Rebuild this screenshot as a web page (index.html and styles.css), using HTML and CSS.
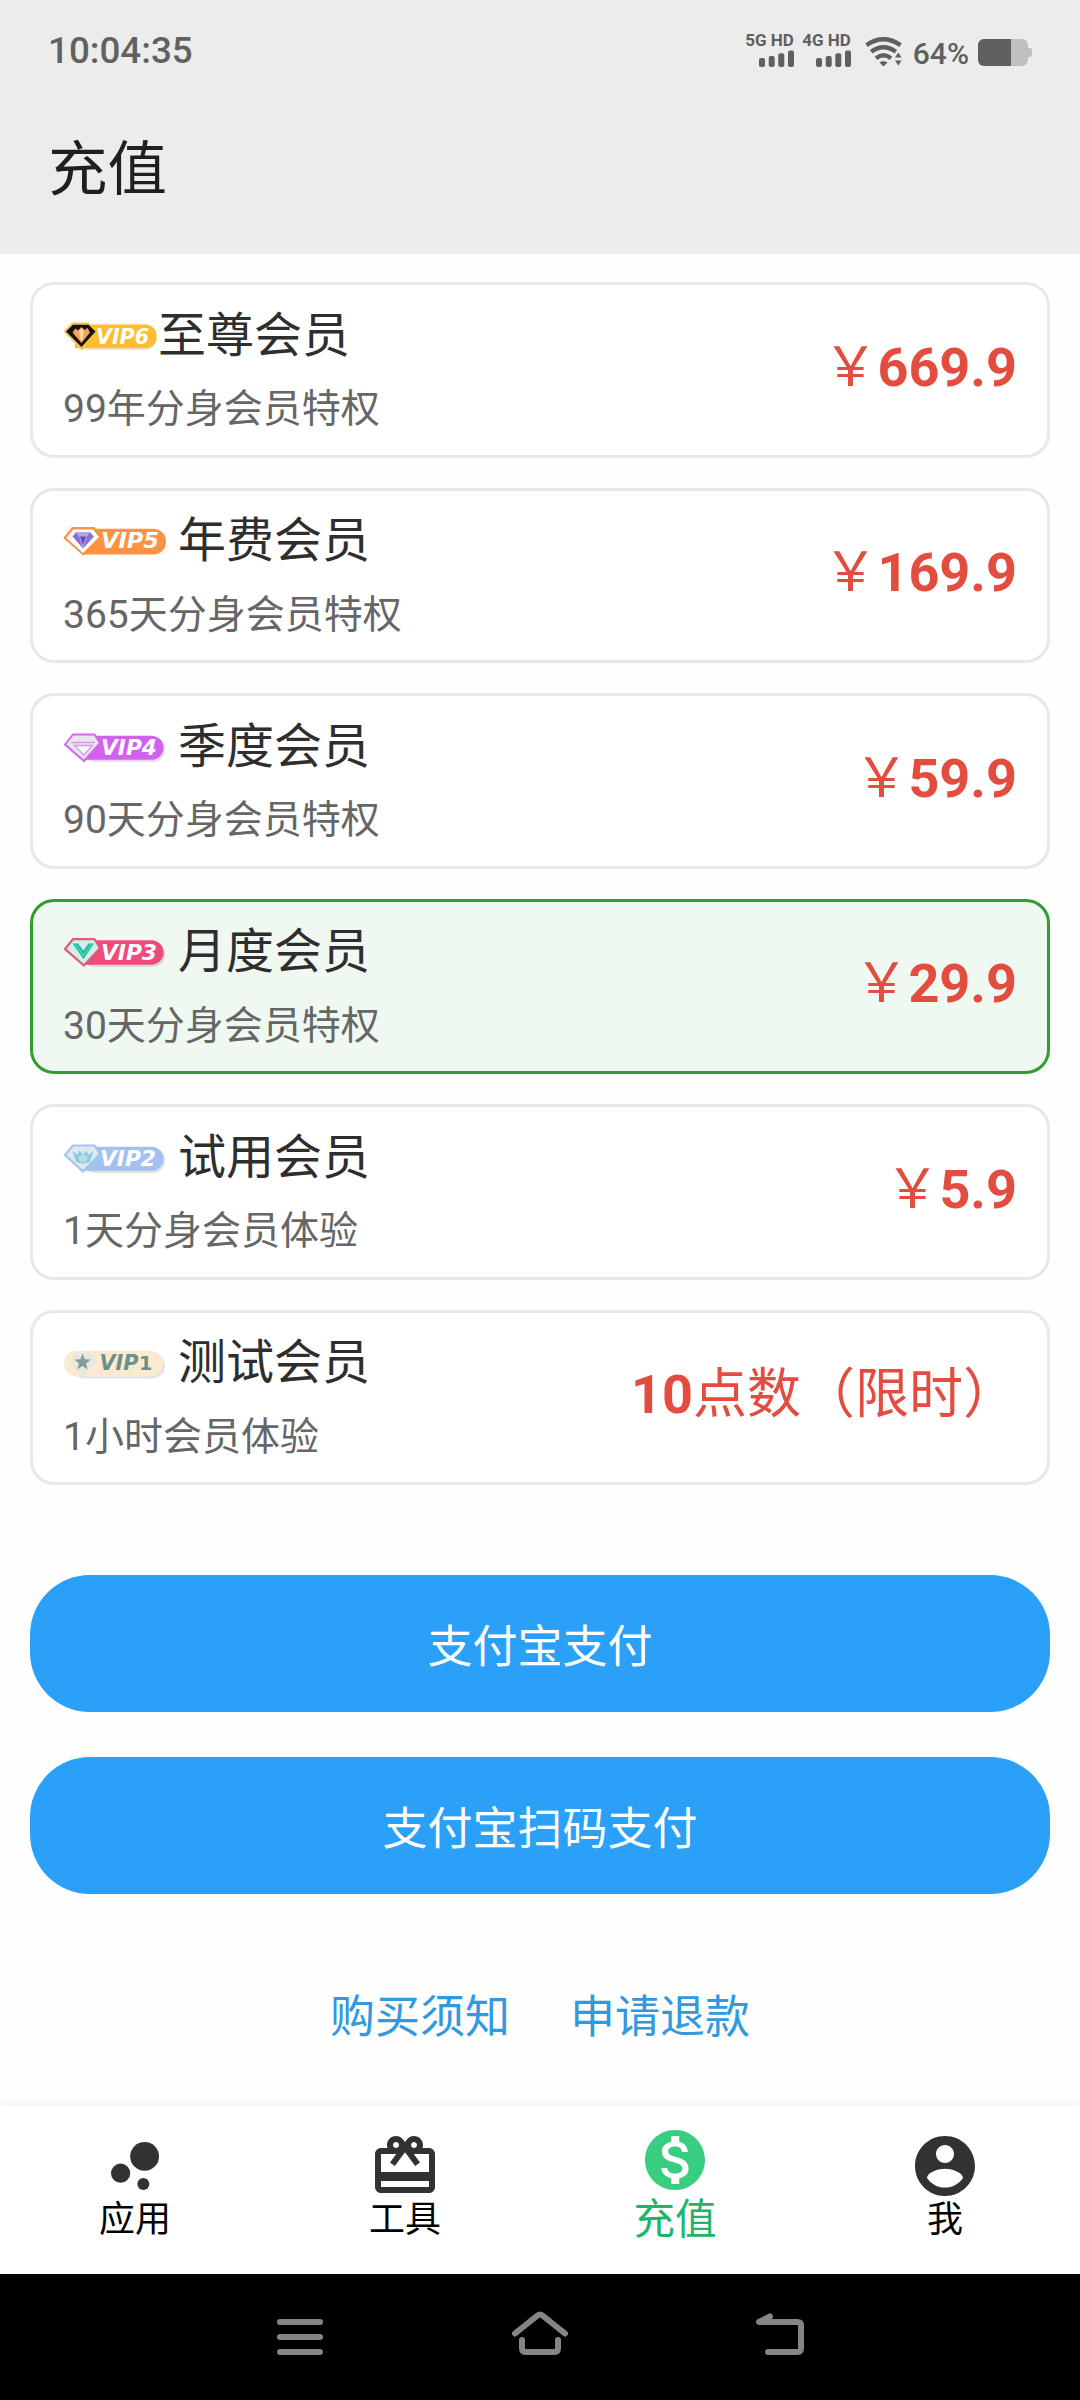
FILE: index.html
```html
<!DOCTYPE html>
<html lang="zh-CN">
<head>
<meta charset="utf-8">
<title>充值</title>
<link rel="stylesheet" href="styles.css">
</head>
<body>
<div class="screen">
  <header class="header">
    <div class="status">
      <span class="clock">10:04:35</span>
      <div class="indicators">
        <div class="signal">
          <span class="signal-label">5G HD</span>
          <svg class="bars" width="35" height="17" viewBox="0 0 35 17"><rect x="0" y="8" width="6" height="9" rx="2"/><rect x="9.7" y="6" width="6" height="11" rx="2"/><rect x="19.3" y="3.3" width="6" height="13.7" rx="2"/><rect x="29" y="0.5" width="6" height="16.5" rx="2"/></svg>
        </div>
        <div class="signal">
          <span class="signal-label">4G HD</span>
          <svg class="bars" width="35" height="17" viewBox="0 0 35 17"><rect x="0" y="8" width="6" height="9" rx="2"/><rect x="9.7" y="6" width="6" height="11" rx="2"/><rect x="19.3" y="3.3" width="6" height="13.7" rx="2"/><rect x="29" y="0.5" width="6" height="16.5" rx="2"/></svg>
        </div>
        <svg class="wifi" width="38" height="30" viewBox="0 0 38 30">
          <g fill="none" stroke="#5f5f5f" stroke-width="4.400">
            <path d="M1.500 8.200Q18.500 -3.800 35.500 8.200"/>
            <path d="M6.200 14.700Q18.500 5.700 30.800 14.700"/>
            <path d="M11 21.200Q18.500 15.200 26 21.200"/>
          </g>
          <path d="M14.500 25.500q4-2.500 8 0L18.500 29.500z" fill="#5f5f5f"/>
          <path d="M30 20.500l3.300-5 3.300 5zM30 23.500h6.600l-3.300 5z" fill="#5f5f5f" stroke="#ececec" stroke-width="1" paint-order="stroke"/>
        </svg>
        <span class="percent">64%</span>
        <svg class="battery" width="54" height="27" viewBox="0 0 54 27">
          <path d="M6 0H44a6 6 0 0 1 6 6v3h1.500a2.500 2.500 0 0 1 2.500 2.500v4a2.500 2.500 0 0 1-2.500 2.500H50v3a6 6 0 0 1-6 6H6a6 6 0 0 1-6-6V6a6 6 0 0 1 6-6z" fill="#c0c0c0"/>
          <path d="M6 0H33V27H6a6 6 0 0 1-6-6V6a6 6 0 0 1 6-6z" fill="#5f5f5f"/>
        </svg>
      </div>
    </div>
    <h1 class="page-title">充值</h1>
  </header>

  <main class="content">
    <section class="plans">
      <article class="plan">
        <div class="plan-info">
          <div class="plan-name">
            <svg class="badge badge-tight" width="95" height="36" viewBox="0 0 95 36">
              <rect x="16" y="7.500" width="77.500" height="24.500" rx="11" fill="#e9e4dc"/>
              <path d="M12 6.500H82.500a11 11 0 0 1 11 12a11 11 0 0 1-11 11.700H12z" fill="#fcbd33"/>
              <path d="M0.500 13.500L9 4.500H26L33 13.500L19 32.500z" fill="#f5c553"/>
              <path d="M3 13.500L10 6.800H25.500L32.500 13.500L18.500 29z" fill="#17110f"/>
              <path d="M9.500 14.500l3-4 2.500 2 3.500-3.500 3 3 3-2 2.500 4.500-8.500 10.500z" fill="#f7a35c"/>
              <path d="M16 13l2.500-3 2.500 3-1.500 9h-2z" fill="#ffd99a"/>
              <text class="badge-text" x="33" y="25.700" textLength="53" lengthAdjust="spacingAndGlyphs">VIP6</text>
            </svg>
            <span>至尊会员</span>
          </div>
          <p class="plan-desc">99年分身会员特权</p>
        </div>
        <div class="price"><span class="cjk">￥</span>669.9</div>
      </article>

      <article class="plan">
        <div class="plan-info">
          <div class="plan-name">
            <svg class="badge" width="104" height="36" viewBox="0 0 104 36">
              <path d="M20 5.700H90.500a12.500 12.500 0 0 1 12.500 13a12.500 12.500 0 0 1-12.500 12.800H20z" fill="#fd9243"/>
              <path d="M0.300 15L9 4H31.500L38 13L20.300 32.800z" fill="#fd9243"/>
              <path d="M3.300 15L10.300 6.500H30L36 14L20 30z" fill="#fff"/>
              <path d="M9.500 13.500L13 9.300H27L31 13.500L20 25.500z" fill="#8b70d4"/>
              <path d="M13 9.300H27l-3 4.200H16zM16 13.500h8L20 25.500z" fill="#b7a4ee"/>
              <path d="M17 13.500h6L20 22z" fill="#654bb8"/>
              <text class="badge-text" x="38" y="25.300" textLength="58" lengthAdjust="spacingAndGlyphs">VIP5</text>
            </svg>
            <span>年费会员</span>
          </div>
          <p class="plan-desc">365天分身会员特权</p>
        </div>
        <div class="price"><span class="cjk">￥</span>169.9</div>
      </article>

      <article class="plan">
        <div class="plan-info">
          <div class="plan-name">
            <svg class="badge" width="104" height="36" viewBox="0 0 104 36">
              <rect x="20" y="8" width="82" height="25" rx="12" fill="#eadcf0"/>
              <path d="M20 6.700H88.500a12 12 0 0 1 12 12a12 12 0 0 1-12 12H20z" fill="#d460ef"/>
              <path d="M2 15.500L10 5.500H31.500L37 14L21 32z" fill="#ece4f2" stroke="#ce6be2" stroke-width="2"/>
              <path d="M8 13.500h24M11.500 16.500h18L21 26z" fill="#faf6fc" stroke="#d39be2" stroke-width="1.300"/>
              <text class="badge-text" x="38" y="25.700" textLength="56" lengthAdjust="spacingAndGlyphs">VIP4</text>
            </svg>
            <span>季度会员</span>
          </div>
          <p class="plan-desc">90天分身会员特权</p>
        </div>
        <div class="price"><span class="cjk">￥</span>59.9</div>
      </article>

      <article class="plan plan-selected">
        <div class="plan-info">
          <div class="plan-name">
            <svg class="badge" width="104" height="36" viewBox="0 0 104 36">
              <rect x="20" y="8" width="82" height="25" rx="12" fill="#d5dcd6"/>
              <path d="M20 6.200H88.500a12 12 0 0 1 12 12a12 12 0 0 1-12 12.500H20z" fill="#ee4b7d"/>
              <path d="M2 15L10 5.200H31.500L37 14L21 31.500z" fill="#d5eee5" stroke="#da5d7e" stroke-width="2.200"/>
              <path d="M9.500 9.500h5.500l5.500 7 5-7H31L20.500 25z" fill="#18bda0"/>
              <path d="M15 9.500l5.500 7 5-7M12 10l8.500 11.500L29 10" fill="none" stroke="#7ee0c8" stroke-width="1"/>
              <text class="badge-text" x="38" y="25.700" textLength="56" lengthAdjust="spacingAndGlyphs">VIP3</text>
            </svg>
            <span>月度会员</span>
          </div>
          <p class="plan-desc">30天分身会员特权</p>
        </div>
        <div class="price"><span class="cjk">￥</span>29.9</div>
      </article>

      <article class="plan">
        <div class="plan-info">
          <div class="plan-name">
            <svg class="badge" width="104" height="36" viewBox="0 0 104 36">
              <rect x="20" y="8" width="82" height="25" rx="12" fill="#dfe1e6"/>
              <path d="M20 6.700H88.500a12 12 0 0 1 12 12a12 12 0 0 1-12 12H20z" fill="#a2c1ef"/>
              <path d="M2 15L10 5.500H31.500L37 14L20 31.500z" fill="#dce9f1" stroke="#a4c5ea" stroke-width="2.200"/>
              <path d="M9.500 11l5 4 2-4.500 3.500 4 3.500-4 2 4.500 5-4-3.500 10.500q-7 4-14 0z" fill="#8dc8dc"/>
              <path d="M15 17l5-3 5 3-2 5h-6z" fill="#b4deeb"/>
              <text class="badge-text" x="37" y="25.700" textLength="56" lengthAdjust="spacingAndGlyphs">VIP2</text>
            </svg>
            <span>试用会员</span>
          </div>
          <p class="plan-desc">1天分身会员体验</p>
        </div>
        <div class="price"><span class="cjk">￥</span>5.9</div>
      </article>

      <article class="plan">
        <div class="plan-info">
          <div class="plan-name">
            <svg class="badge" width="104" height="36" viewBox="0 0 104 36">
              <rect x="8" y="8" width="94" height="25.500" rx="12.500" fill="#e4e4e4"/>
              <rect x="1" y="5.700" width="99" height="25.500" rx="12.700" fill="#fde8d0"/>
              <path d="M6 17L13 7.500H27L33.500 17L20 31z" fill="#e6e8e2"/>
              <path d="M19.500 8.500l2.200 5.800 6.100.2-4.800 3.900 1.700 6-5.200-3.500-5.300 3.500 1.800-6-4.800-3.900 6.100-.2z" fill="#8b9b98"/>
              <text class="badge-text badge-text-dark" x="36.500" y="25" textLength="39" lengthAdjust="spacingAndGlyphs">VIP</text>
              <text class="badge-text badge-text-dark badge-text-thin" x="76" y="25">1</text>
            </svg>
            <span>测试会员</span>
          </div>
          <p class="plan-desc">1小时会员体验</p>
        </div>
        <div class="price">10<span class="cjk">点数（限时）</span></div>
      </article>
    </section>

    <div class="actions">
      <button class="pay">支付宝支付</button>
      <button class="pay">支付宝扫码支付</button>
    </div>

    <div class="links">
      <a class="link">购买须知</a>
      <a class="link">申请退款</a>
    </div>
  </main>

  <nav class="tabs">
    <div class="tab">
      <svg class="tab-icon" viewBox="0 0 24 24"><circle cx="7.200" cy="14.400" r="3.200"/><circle cx="14.800" cy="18" r="2"/><circle cx="15.200" cy="8.800" r="4.800"/></svg>
      <span class="tab-label">应用</span>
    </div>
    <div class="tab">
      <svg class="tab-icon" viewBox="0 0 24 24"><path d="M20 6h-2.180c.11-.31.18-.65.18-1 0-1.660-1.340-3-3-3-1.050 0-1.960.54-2.500 1.350l-.5.67-.5-.68C10.960 2.540 10.050 2 9 2 7.340 2 6 3.340 6 5c0 .35.07.69.18 1H4c-1.110 0-1.990.89-1.990 2L2 19c0 1.110.89 2 2 2h16c1.110 0 2-.89 2-2V8c0-1.110-.89-2-2-2zm-5-2c.55 0 1 .45 1 1s-.45 1-1 1-1-.45-1-1 .45-1 1-1zM9 4c.55 0 1 .45 1 1s-.45 1-1 1-1-.45-1-1 .45-1 1-1zm11 15H4v-2h16v2zm0-5H4V8h5.080L7 10.830 8.620 12 11 8.760l1-1.360 1 1.360L15.380 12 17 10.830 14.920 8H20v6z"/></svg>
      <span class="tab-label">工具</span>
    </div>
    <div class="tab tab-active">
      <svg class="tab-icon" viewBox="0 0 24 24"><path d="M12 2C6.480 2 2 6.480 2 12s4.480 10 10 10 10-4.480 10-10S17.520 2 12 2zm1.410 16.090V20h-2.670v-1.930c-1.710-.36-3.160-1.460-3.270-3.400h1.960c.1 1.050.82 1.870 2.650 1.870 1.960 0 2.400-.98 2.400-1.590 0-.83-.44-1.610-2.670-2.140-2.480-.6-4.180-1.620-4.180-3.670 0-1.720 1.390-2.840 3.110-3.210V4h2.670v1.950c1.860.45 2.790 1.860 2.850 3.390H14.300c-.05-1.110-.64-1.870-2.220-1.870-1.500 0-2.400.68-2.400 1.640 0 .84.65 1.390 2.670 1.910s4.180 1.390 4.180 3.910c-.02 1.830-1.380 2.830-3.120 3.160z"/></svg>
      <span class="tab-label">充值</span>
    </div>
    <div class="tab">
      <svg class="tab-icon" viewBox="0 0 24 24"><path d="M12 2C6.480 2 2 6.480 2 12s4.480 10 10 10 10-4.480 10-10S17.520 2 12 2zm0 3c1.660 0 3 1.340 3 3s-1.340 3-3 3-3-1.340-3-3 1.340-3 3-3zm0 14.200c-2.500 0-4.710-1.280-6-3.220.03-1.990 4-3.080 6-3.080 1.990 0 5.970 1.090 6 3.080-1.290 1.940-3.500 3.220-6 3.220z"/></svg>
      <span class="tab-label">我</span>
    </div>
  </nav>

  <footer class="system">
    <svg width="60" height="60" viewBox="0 0 60 60"><path d="M10 18H50M10 33H50M10 48H50"/></svg>
    <svg width="60" height="60" viewBox="0 0 60 60"><path d="M5 29.500L27.500 11.500q2.500-2 5 0L55 29.500M12 36v8.500q0 3.500 3.500 3.500h29q3.500 0 3.500-3.500V36"/></svg>
    <svg width="60" height="60" viewBox="0 0 60 60"><path d="M20 12.500L9 18H47.500q3.500 0 3.500 3.500v23q0 3.500-3.500 3.500H18"/></svg>
  </footer>
</div>
</body>
</html>
```
FILE: styles.css
```css
* {
  box-sizing: border-box;
  margin: 0;
  padding: 0;
}

body {
  width: 1080px;
  height: 2400px;
  background: #fefefe;
  font-family: Roboto, "Noto Sans CJK SC", sans-serif;
}

.screen {
  display: flex;
  flex-direction: column;
  height: 2400px;
}

/* Header */
.header {
  height: 254px;
  background: #ececec;
  flex: none;
}

.status {
  display: flex;
  justify-content: space-between;
  height: 100px;
  padding: 0 48px 0 48px;
}

.clock {
  color: #616161;
  font-size: 36.750px;
  font-weight: 500;
  line-height: 102px;
}

.indicators {
  display: flex;
  align-items: flex-start;
}

.signal {
  display: flex;
  flex-direction: column;
  align-items: flex-end;
  width: 47px;
  margin: 31px 10px 0 0;
}

.signal-label {
  color: #5f5f5f;
  font-size: 17px;
  font-weight: 700;
  line-height: 19px;
  white-space: nowrap;
}

.bars {
  fill: #5f5f5f;
}

.wifi {
  margin: 37px 10px 0 4px;
}

.percent {
  color: #5f5f5f;
  font-size: 30px;
  font-weight: 500;
  line-height: 40px;
  margin: 34px 9px 0 0;
}

.battery {
  margin-top: 39px;
}

.page-title {
  padding-left: 48px;
  color: #1f1f1f;
  font-size: 59.500px;
  font-weight: 400;
  line-height: 70px;
  margin-top: 35px;
}

/* Plans */
.content {
  flex: 1;
  padding: 28px 30px 0;
}

.plans {
  display: flex;
  flex-direction: column;
  gap: 30px;
}

.plan {
  display: flex;
  justify-content: space-between;
  height: 175.500px;
  padding: 17.500px 30px 0;
  border: 3px solid #e8e8e8;
  border-radius: 24px;
  background: #fff;
}

.plan-selected {
  border-color: #2f9e32;
  background: #f0f9f1;
}

.plan-name {
  display: flex;
  align-items: center;
  height: 66px;
  color: #2e2e2e;
  font-size: 48px;
  line-height: 66px;
}

.badge {
  flex: none;
  margin-right: 11px;
}

.badge-tight {
  margin-right: 0;
}

.badge-text {
  fill: #fff;
  font-family: "DejaVu Sans", sans-serif;
  font-size: 20.500px;
  font-style: italic;
  font-weight: 700;
}

.badge-text-dark {
  fill: #66928a;
}

.badge-text-thin {
  font-style: normal;
  font-size: 19px;
}

.plan-desc {
  margin-top: 14.500px;
  color: #666;
  font-size: 39px;
  line-height: 52px;
}

.price {
  height: 130px;
  color: #e34d40;
  font-size: 54px;
  font-weight: 700;
  line-height: 130px;
}

.cjk {
  font-weight: 400;
}

/* Actions */
.actions {
  display: flex;
  flex-direction: column;
  gap: 45px;
  margin-top: 90px;
}

.pay {
  height: 137px;
  border: 0;
  border-radius: 60px;
  background: #2aa0f8;
  color: #fff;
  font-family: inherit;
  font-size: 45px;
  line-height: 60px;
  padding-top: 9px;
}

.links {
  display: flex;
  justify-content: center;
  gap: 60px;
  margin-top: 92px;
}

.link {
  color: #3099e0;
  font-size: 45px;
  line-height: 64px;
}

/* Tab bar */
.tabs {
  display: flex;
  flex: none;
  height: 168px;
  background: #fff;
  box-shadow: 0 -3px 8px rgba(0, 0, 0, 0.050);
}

.tab {
  display: flex;
  flex: 1;
  flex-direction: column;
  align-items: center;
  padding-top: 24px;
}

.tab-icon {
  width: 72px;
  height: 72px;
  fill: #323232;
}

.tab-label {
  margin-top: -5px;
  color: #000;
  font-size: 36px;
  line-height: 46px;
}

.tab-active {
  padding-top: 18px;
}

.tab-active .tab-icon {
  fill: #39ce7f;
}

.tab-active .tab-label {
  margin-top: 1px;
  color: #20b566;
  font-size: 41.500px;
}

/* System keys */
.system {
  display: flex;
  flex: none;
  justify-content: center;
  gap: 180px;
  height: 126px;
  padding-top: 30px;
  background: #000;
}

.system svg {
  fill: none;
  stroke: #858585;
  stroke-width: 6;
  stroke-linecap: round;
  stroke-linejoin: round;
}
```
